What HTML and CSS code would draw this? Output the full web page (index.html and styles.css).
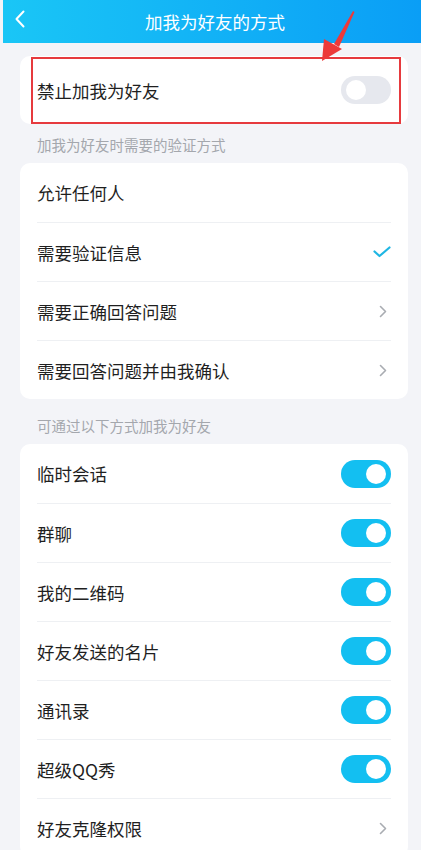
FILE: index.html
```html
<!DOCTYPE html>
<html lang="zh-CN">
<head>
    <meta charset="UTF-8">
    <meta name="viewport" content="width=device-width, initial-scale=1.0">
    <title>加我为好友的方式</title>
    <link rel="stylesheet" href="styles.css">
</head>
<body>
    <header class="nav">
        <svg class="back" width="12" height="18" viewBox="0 0 12 18">
            <path d="M9.5 1.5 L2.5 9 L9.5 16.5" fill="none" stroke="#fff" stroke-width="2" stroke-linecap="round" stroke-linejoin="round"/>
        </svg>
        <h1 class="title">加我为好友的方式</h1>
        <svg class="pointer" width="40" height="56" viewBox="0 0 40 56">
            <polygon points="33,2 34.5,3 19,38 14,35" fill="#ec3a3a"/>
            <polygon points="2,52 4,30 22,40" fill="#ec3a3a"/>
        </svg>
    </header>

    <main class="page">
        <section class="card first">
            <div class="row">
                <span>禁止加我为好友</span>
                <span class="switch"></span>
            </div>
            <div class="mark"></div>
        </section>

        <p class="label top">加我为好友时需要的验证方式</p>
        <section class="card">
            <div class="row"><span>允许任何人</span></div>
            <div class="row">
                <span>需要验证信息</span>
                <svg width="18" height="12" viewBox="0 0 18 12">
                    <path d="M1.5 5.5 L6.5 10 L16.5 1.5" fill="none" stroke="#1fb6e3" stroke-width="2.2" stroke-linecap="round" stroke-linejoin="round"/>
                </svg>
            </div>
            <div class="row">
                <span>需要正确回答问题</span>
                <svg class="chev" width="8" height="13" viewBox="0 0 8 13">
                    <path d="M1.5 1.5 L6.5 6.5 L1.5 11.5" fill="none" stroke="#a9acb2" stroke-width="1.6" stroke-linecap="round" stroke-linejoin="round"/>
                </svg>
            </div>
            <div class="row">
                <span>需要回答问题并由我确认</span>
                <svg class="chev" width="8" height="13" viewBox="0 0 8 13">
                    <path d="M1.5 1.5 L6.5 6.5 L1.5 11.5" fill="none" stroke="#a9acb2" stroke-width="1.6" stroke-linecap="round" stroke-linejoin="round"/>
                </svg>
            </div>
        </section>

        <p class="label">可通过以下方式加我为好友</p>
        <section class="card">
            <div class="row"><span>临时会话</span><span class="switch on"></span></div>
            <div class="row"><span>群聊</span><span class="switch on"></span></div>
            <div class="row"><span>我的二维码</span><span class="switch on"></span></div>
            <div class="row"><span>好友发送的名片</span><span class="switch on"></span></div>
            <div class="row"><span>通讯录</span><span class="switch on"></span></div>
            <div class="row"><span>超级QQ秀</span><span class="switch on"></span></div>
            <div class="row">
                <span>好友克隆权限</span>
                <svg class="chev" width="8" height="13" viewBox="0 0 8 13">
                    <path d="M1.5 1.5 L6.5 6.5 L1.5 11.5" fill="none" stroke="#a9acb2" stroke-width="1.6" stroke-linecap="round" stroke-linejoin="round"/>
                </svg>
            </div>
        </section>
    </main>
</body>
</html>
```

FILE: styles.css
```css
body {
    margin: 0;
    background: #f3f4f8;
    font-family: "Noto Sans CJK SC", "Noto Sans", sans-serif;
    color: #1f1f1f;
    overflow: hidden;
}

.nav {
    position: relative;
    height: 43px;
    margin-left: 3px;
    display: flex;
    align-items: center;
    justify-content: center;
    background: linear-gradient(90deg, #1ac6f6, #0a9ef6);
}

.back {
    position: absolute;
    left: 11px;
    top: 10px;
}

.title {
    margin: 0 0 0 6px;
    font-size: 17.5px;
    font-weight: 400;
    color: #fff;
}

.pointer {
    position: absolute;
    left: 317px;
    top: 9px;
    z-index: 2;
}

.page {
    padding: 13px 13px 0 20px;
}

.card {
    background: #fff;
    border-radius: 10px;
}

.card.first {
    position: relative;
}

.mark {
    position: absolute;
    left: 11px;
    top: 1px;
    width: 366px;
    height: 63px;
    border: 2px solid #e63a3e;
}

.row {
    height: 59px;
    margin: 0 17px;
    display: flex;
    align-items: center;
    justify-content: space-between;
    font-size: 17.5px;
    border-top: 1px solid #eef0f3;
    box-sizing: border-box;
}

.row:first-child {
    border-top: none;
}

.first .row {
    height: 68px;
}

.chev {
    margin-right: 4px;
}

.switch {
    position: relative;
    width: 50px;
    height: 28px;
    border-radius: 14px;
    background: #e6e8ee;
}

.switch::after {
    content: "";
    position: absolute;
    top: 4px;
    left: 5px;
    width: 20px;
    height: 20px;
    border-radius: 50%;
    background: #fff;
}

.switch.on {
    background: #13bff1;
}

.switch.on::after {
    left: 25px;
}

.label {
    margin: 0;
    padding: 18px 17px 9px;
    font-size: 14.5px;
    line-height: 18px;
    color: #a4a7ad;
}

.label.top {
    padding-top: 12px;
}
```
